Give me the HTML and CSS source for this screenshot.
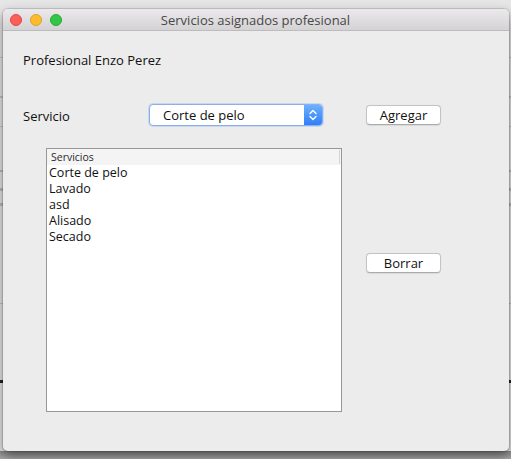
FILE: index.html
```html
<!DOCTYPE html>
<html>
<head>
<meta charset="utf-8">
<link rel="stylesheet" href="styles.css">
</head>
<body>
<div class="desktop">
  <div class="window">
    <div class="titlebar">
      <div class="lights">
        <span class="light red"></span>
        <span class="light yellow"></span>
        <span class="light green"></span>
      </div>
      <div class="title">Servicios asignados profesional</div>
    </div>
    <div class="content">
      <div class="row-prof">Profesional Enzo Perez</div>
      <div class="row-serv">
        <span class="label">Servicio</span>
        <div class="combo">
          <span class="combo-text">Corte de pelo</span>
          <span class="combo-arrow">
            <svg width="18" height="20" viewBox="0 0 18 20">
              <path d="M6 8.5 L9 5.5 L12 8.5" fill="none" stroke="#fff" stroke-width="1.4" stroke-linecap="round" stroke-linejoin="round"/>
              <path d="M6 11.5 L9 14.5 L12 11.5" fill="none" stroke="#fff" stroke-width="1.4" stroke-linecap="round" stroke-linejoin="round"/>
            </svg>
          </span>
        </div>
        <button class="btn btn-add">Agregar</button>
      </div>
      <div class="row-list">
        <div class="list">
          <div class="list-header"><span class="header-cell">Servicios</span></div>
          <div class="item">Corte de pelo</div>
          <div class="item">Lavado</div>
          <div class="item">asd</div>
          <div class="item">Alisado</div>
          <div class="item">Secado</div>
        </div>
        <div class="side">
          <button class="btn">Borrar</button>
        </div>
      </div>
    </div>
  </div>
</div>
</body>
</html>
```

FILE: styles.css
```css
html, body {
  margin: 0;
  padding: 0;
}
body {
  width: 511px;
  height: 459px;
  overflow: hidden;
  font-family: "Open Sans", "DejaVu Sans", sans-serif;
  color: #1e1e1e;
}
.desktop {
  width: 511px;
  height: 459px;
  box-sizing: border-box;
  padding: 9px 0 0 3px;
  background-color: #e6e6e6;
  background-image:
    linear-gradient(to bottom, transparent 0, transparent 451px, #8a8a8a 451px, #a9a9a9 459px),
    linear-gradient(to bottom, transparent 57px, #c9c9c9 57px, #c9c9c9 58px, transparent 58px,
      transparent 96px, #c4c4c4 96px, #c4c4c4 98px, transparent 98px,
      transparent 126px, #c9c9c9 126px, #c9c9c9 127px, transparent 127px,
      transparent 170px, #bcbcbc 170px, #bcbcbc 172px, transparent 172px,
      transparent 188px, #bcbcbc 188px, #bcbcbc 191px, transparent 191px,
      transparent 203px, #bcbcbc 203px, #bcbcbc 206px, transparent 206px,
      transparent 303px, #c4c4c4 303px, #c4c4c4 304px, transparent 304px,
      transparent 380px, #222 380px, #222 383px, transparent 383px);
}
.window {
  width: 506px;
  height: 442px;
  background: #ececec;
  border-radius: 5px;
  box-shadow: 0 0 0 1px rgba(0,0,0,0.12), 0 5px 12px rgba(0,0,0,0.45);
  overflow: hidden;
  display: flex;
  flex-direction: column;
}
.titlebar {
  position: relative;
  height: 21px;
  flex: none;
  background: linear-gradient(to bottom, #ebe9eb, #d4d2d4);
  border-bottom: 1px solid #bcbcbc;
  display: flex;
  align-items: center;
  justify-content: center;
}
.lights {
  position: absolute;
  left: 7px;
  top: 5px;
  display: flex;
  gap: 8px;
}
.light {
  width: 12px;
  height: 12px;
  border-radius: 50%;
  box-sizing: border-box;
}
.red { background: #fc5f57; border: 0.5px solid #de4a42; }
.yellow { background: #fdbc2e; border: 0.5px solid #dea122; }
.green { background: #33c748; border: 0.5px solid #27aa35; }
.title {
  font-size: 13px;
  line-height: 16px;
  color: #474747;
  margin-left: -1px;
}
.content {
  display: flex;
  flex-direction: column;
}
.row-prof {
  margin-top: 21px;
  padding-left: 20px;
  font-size: 13px;
  line-height: 16px;
  color: #111;
}
.row-serv {
  margin-top: 36px;
  height: 22px;
  display: flex;
  align-items: center;
  padding-left: 20px;
}
.label {
  width: 126px;
  font-size: 13px;
  line-height: 16px;
  padding-top: 1px;
  color: #111;
}
.combo {
  width: 174px;
  height: 22px;
  box-sizing: border-box;
  border: 1px solid #88b0ec;
  border-radius: 4px;
  box-shadow: 0 0 0 1px rgba(140,180,240,0.35);
  background: #fff;
  display: flex;
  align-items: center;
  overflow: hidden;
}
.combo-text {
  flex: 1;
  padding-left: 13px;
  font-size: 13px;
  line-height: 16px;
  color: #111;
}
.combo-arrow {
  width: 18px;
  height: 20px;
  background: linear-gradient(to bottom, #6db0fc, #2f7ef7);
  display: flex;
  align-items: center;
  justify-content: center;
}
.btn {
  display: block;
  width: 75px;
  height: 20px;
  box-sizing: border-box;
  margin: 0;
  padding: 0;
  background: #fff;
  border: 1px solid #c3c3c3;
  border-bottom-color: #ababab;
  border-radius: 4px;
  font-family: "Open Sans", "DejaVu Sans", sans-serif;
  font-size: 13px;
  line-height: 17px;
  color: #111;
  box-shadow: 0 0.5px 1px rgba(0,0,0,0.08);
}
.btn-add {
  margin-left: 43px;
}
.row-list {
  margin-top: 22px;
  padding-left: 43px;
  display: flex;
  align-items: flex-start;
}
.list {
  width: 296px;
  height: 264px;
  box-sizing: border-box;
  border: 1px solid #979797;
  background: #fff;
}
.list-header {
  height: 16px;
  background: #f4f4f4;
  display: flex;
  padding-right: 1px;
}
.header-cell {
  flex: 1;
  padding-left: 4px;
  font-size: 10.5px;
  line-height: 14px;
  color: #2a2a2a;
  border-right: 1px solid #d6d6d6;
  margin: 1px 0;
}
.item {
  padding-left: 2px;
  font-size: 12.5px;
  line-height: 16px;
  color: #111;
}
.side {
  display: flex;
  flex-direction: column;
  margin-left: 24px;
  padding-top: 105px;
}
```
